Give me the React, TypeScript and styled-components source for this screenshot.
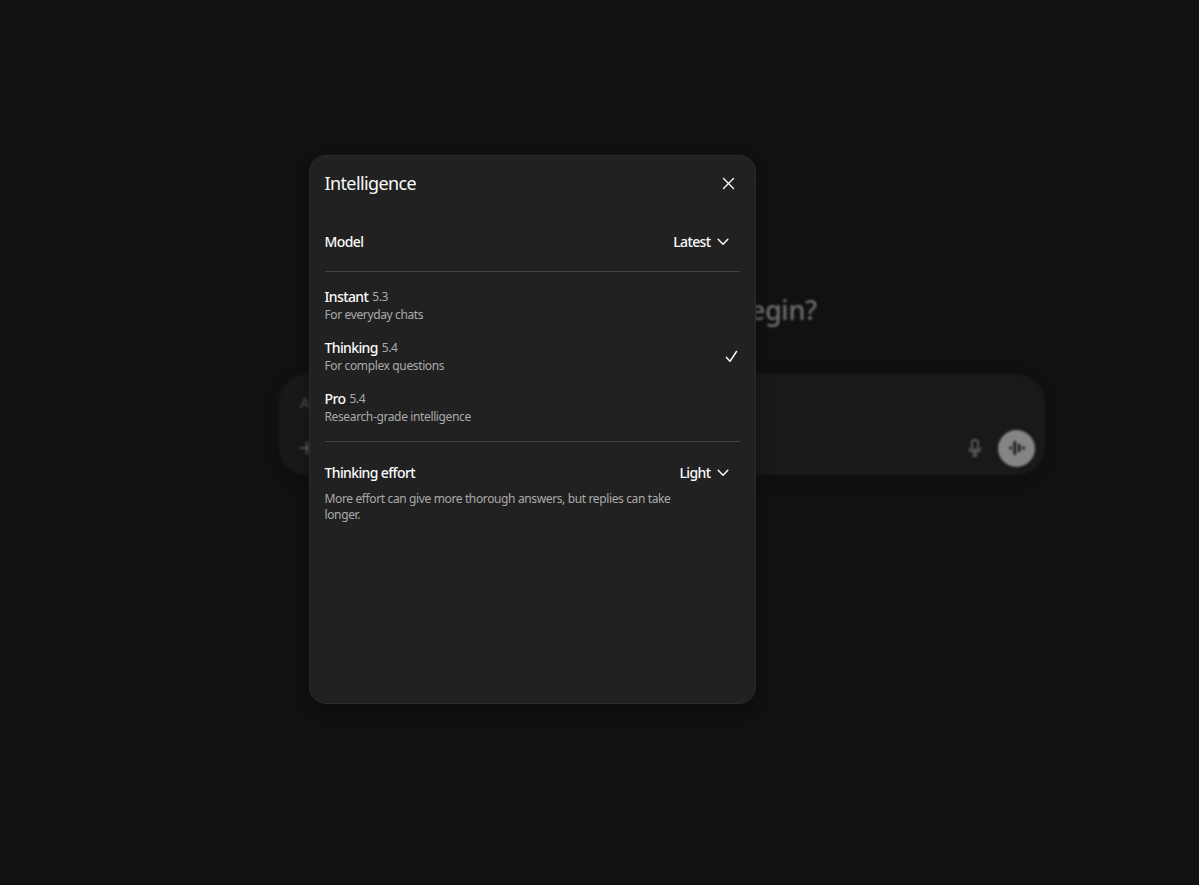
import React from "react";
import styled, { createGlobalStyle } from "styled-components";

const GlobalStyle = createGlobalStyle`
  *, *::before, *::after { box-sizing: border-box; }
  body {
    margin: 0;
    background: #111111;
    font-family: "Segoe UI", "Noto Sans", "Open Sans", sans-serif;
    overflow: hidden;
  }
  h1, h2, p { margin: 0; font-weight: 400; }
  button { font: inherit; color: inherit; background: none; border: 0; padding: 0; }
`;

const Page = styled.div`
  position: relative;
  width: 1199px;
  height: 885px;
  background: #111111;
  overflow: hidden;
`;

const Backdrop = styled.main`
  display: flex;
  flex-direction: column;
  align-items: center;
  width: 766px;
  margin-left: 279px;
  padding-top: 290px;
  filter: blur(0.8px);
`;

const Greeting = styled.h1`
  height: 40px;
  font-size: 27px;
  font-weight: 500;
  line-height: 40px;
  letter-spacing: -0.25px;
  color: #707070;
  white-space: nowrap;
`;

const Composer = styled.section`
  display: flex;
  flex-direction: column;
  justify-content: space-between;
  width: 100%;
  height: 101px;
  margin-top: 44px;
  padding: 17px 10px 8.5px 21px;
  border-radius: 28px;
  background: #191919;
  box-shadow: 0 4px 16px rgba(0, 0, 0, 0.18);
`;

const Placeholder = styled.p`
  font-size: 15px;
  line-height: 22px;
  color: #545454;
`;

const Tools = styled.div`
  display: flex;
  align-items: center;
  color: #6c6c6c;
`;

const ToolIcon = styled.svg`
  display: block;
  flex: none;
`;

const Spacer = styled.div`
  flex: 1;
`;

const VoiceButton = styled.button`
  display: flex;
  align-items: center;
  justify-content: center;
  width: 37px;
  height: 37px;
  margin-left: 16px;
  border-radius: 50%;
  background: #858585;
  color: #101010;
`;

const Dialog = styled.div`
  position: absolute;
  left: 309px;
  top: 155px;
  width: 447px;
  height: 549px;
  padding: 0 15px 0 14.5px;
  border: 1px solid #2b2b2b;
  border-radius: 17px;
  background: #212121;
  box-shadow: 0 6px 14px rgba(0, 0, 0, 0.35);
  color: #fafafa;
`;

const Header = styled.header`
  display: flex;
  align-items: center;
  justify-content: space-between;
  height: 54px;
  padding-right: 5.5px;
`;

const Title = styled.h2`
  font-size: 18px;
  line-height: 26px;
  letter-spacing: -0.62px;
`;

const CloseButton = styled.button`
  display: flex;
`;

const SettingRow = styled.div<{ $height: number; $top: number }>`
  display: flex;
  align-items: center;
  justify-content: space-between;
  height: ${({ $height }) => $height}px;
  padding: ${({ $top }) => $top}px 11px 0 0;
`;

const Label = styled.span`
  font-size: 14px;
  font-weight: 500;
  line-height: 20px;
  letter-spacing: -0.62px;
`;

const Select = styled.button`
  display: flex;
  align-items: center;
  gap: 6.5px;
`;

const Divider = styled.div`
  height: 1px;
  background: #434343;
`;

const Options = styled.div`
  display: flex;
  flex-direction: column;
  height: 169px;
  padding-top: 14.6px;
`;

const Option = styled.div`
  display: flex;
  align-items: center;
  justify-content: space-between;
  height: 50.8px;
  padding: 0 2.5px 12.5px 0;
`;

const OptionName = styled.div`
  display: flex;
  align-items: flex-start;
  gap: 4px;
  height: 20px;
`;

const OptionText = styled.div`
  height: 36px;
  margin-bottom: 1.5px;
`;

const Version = styled.span`
  font-size: 12px;
  line-height: 20px;
  letter-spacing: -0.4px;
  color: #ababab;
`;

const Detail = styled.p`
  font-size: 12px;
  line-height: 16px;
  letter-spacing: -0.37px;
  color: #ababab;
`;

const Chevron = () => (
  <svg width="12" height="8" viewBox="0 0 12 8" fill="none" stroke="currentColor" strokeWidth="1.5" strokeLinecap="round" strokeLinejoin="round">
    <path d="M1.2 1.3 6 6.2l4.8-4.9" />
  </svg>
);

const Check = () => (
  <svg width="13" height="13" viewBox="0 0 13 13" fill="none" stroke="currentColor" strokeWidth="1.5" strokeLinecap="round" strokeLinejoin="round">
    <path d="M1.5 7.4 5 11.3 11.5 1.5" />
  </svg>
);

const options = [
  { name: "Instant", version: "5.3", detail: "For everyday chats" },
  { name: "Thinking", version: "5.4", detail: "For complex questions", selected: true },
  { name: "Pro", version: "5.4", detail: "Research-grade intelligence" },
];

export default function App() {
  return (
    <Page>
      <GlobalStyle />
      <Backdrop>
        <Greeting>Where should we begin?</Greeting>
        <Composer>
          <Placeholder>Ask anything</Placeholder>
          <Tools>
            <ToolIcon width="14" height="14" viewBox="0 0 14 14" stroke="currentColor" strokeWidth="1.5">
              <path d="M7 .5v13M.5 7h13" />
            </ToolIcon>
            <Spacer />
            <ToolIcon width="14" height="18" viewBox="0 0 14 18" fill="none" stroke="currentColor" strokeWidth="1.5" strokeLinecap="round">
              <rect x="4" y="1" width="6" height="10" rx="3" />
              <path d="M1.3 9.5a5.9 5.2 0 0 0 11.4 0M7 13.7V17M5 16.7h4" />
            </ToolIcon>
            <VoiceButton aria-label="Voice">
              <ToolIcon width="18" height="16" viewBox="0 0 18 16" stroke="currentColor" strokeWidth="2.5" strokeLinecap="round">
                <path d="M2.5 7.4v1.2M6.8 2.2v11.6M11.2 4.9v6.2M15.6 7.4v1.2" />
              </ToolIcon>
            </VoiceButton>
          </Tools>
        </Composer>
      </Backdrop>
      <Dialog role="dialog" aria-label="Intelligence">
        <Header>
          <Title>Intelligence</Title>
          <CloseButton aria-label="Close">
            <svg width="13" height="13" viewBox="0 0 13 13" stroke="currentColor" strokeWidth="1.4" strokeLinecap="round">
              <path d="m1.5 1.5 10 10M11.5 1.5l-10 10" />
            </svg>
          </CloseButton>
        </Header>
        <SettingRow $height={61} $top={3}>
          <Label>Model</Label>
          <Select>
            <Label>Latest</Label>
            <Chevron />
          </Select>
        </SettingRow>
        <Divider />
        <Options>
          {options.map((o) => (
            <Option key={o.name}>
              <OptionText>
                <OptionName>
                  <Label>{o.name}</Label>
                  <Version>{o.version}</Version>
                </OptionName>
                <Detail>{o.detail}</Detail>
              </OptionText>
              {o.selected && <Check />}
            </Option>
          ))}
        </Options>
        <Divider />
        <SettingRow $height={49} $top={12.5}>
          <Label>Thinking effort</Label>
          <Select>
            <Label>Light</Label>
            <Chevron />
          </Select>
        </SettingRow>
        <Detail>
          More effort can give more thorough answers, but replies can take
          <br />
          longer.
        </Detail>
      </Dialog>
    </Page>
  );
}
